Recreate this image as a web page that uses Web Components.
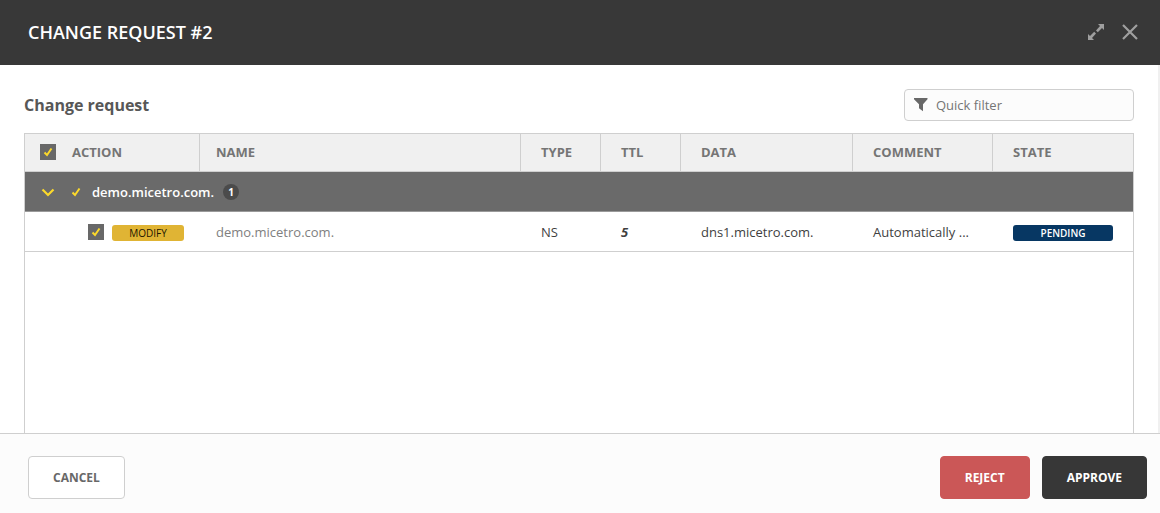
<!DOCTYPE html>
<html lang="en">
<head>
<meta charset="utf-8">
<title>Change request #2</title>
<style>
  html, body { height: 100%; }
  body { margin: 0; font-family: "Open Sans", "Noto Sans", sans-serif; font-size: 13px; color: #3f3f3f; background: #fff; }
</style>
</head>
<body>
<request-dialog>
  <dialog-header slot="header">CHANGE REQUEST #2</dialog-header>
  <section-bar>Change request<quick-filter slot="tools"></quick-filter></section-bar>
  <change-table></change-table>
  <action-button slot="footer-start">CANCEL</action-button>
  <action-button slot="footer-end" kind="danger">REJECT</action-button>
  <action-button slot="footer-end" kind="primary">APPROVE</action-button>
</request-dialog>

<script>
function define(name, html) {
  const template = document.createElement('template');
  template.innerHTML = html;
  customElements.define(name, class extends HTMLElement {
    constructor() {
      super();
      this.attachShadow({ mode: 'open' }).append(template.content.cloneNode(true));
    }
    connectedCallback() {
      const label = this.getAttribute('label');
      const input = this.shadowRoot.querySelector('input[type=checkbox]');
      if (label && input) input.setAttribute('aria-label', label);
    }
  });
}

define('request-dialog', `
<style>
  :host { display: flex; flex-direction: column; height: 100%; }
  main { flex: 1; min-height: 0; box-sizing: border-box; display: flex; flex-direction: column; gap: 12px;
         padding: 24px 24px 0; border-right: 2px solid #f0f0f0; overflow: hidden; }
  footer { display: flex; justify-content: space-between; align-items: center; flex: none; box-sizing: border-box; height: 80px;
           padding: 8px 13px 0 28px; border-top: 1px solid #cfcfcf; background: #fcfcfc; }
  .end { display: flex; gap: 12px; }
</style>
<slot name="header"></slot>
<main><slot></slot></main>
<footer><slot name="footer-start"></slot><div class="end"><slot name="footer-end"></slot></div></footer>`);

define('dialog-header', `
<style>
  :host { display: flex; align-items: center; justify-content: space-between; flex: none; height: 65px; box-sizing: border-box;
          padding: 0 20px 1px 28px; background: #383838; color: #fff; }
  h1 { margin: 0; font-size: 18px; line-height: 24px; font-weight: 600; }
  .tools { display: flex; gap: 14px; }
  button { display: grid; place-items: center; width: 20px; height: 20px; padding: 0; border: 0; background: none; color: #9f9f9f; }
  svg { display: block; }
</style>
<h1><slot></slot></h1>
<div class="tools">
  <button type="button" aria-label="Expand"><svg width="16" height="16" viewBox="0 0 16 16" fill="currentColor"><path d="M10 0h6v6l-2-2-4.200 4.200L8 6.400 12 2zM0 10l2 2 4.200-4.200L8 9.600 4 14l2 2H0z"/></svg></button>
  <button type="button" aria-label="Close"><svg width="16" height="16" viewBox="0 0 16 16" fill="none" stroke="currentColor" stroke-width="2.200"><path d="M1 1l14 14M15 1L1 15"/></svg></button>
</div>`);

define('section-bar', `
<style>
  :host { display: flex; align-items: center; justify-content: space-between; }
  h2 { margin: 0; font-size: 16px; line-height: 24px; font-weight: 700; color: #575757; }
</style>
<h2><slot></slot></h2><slot name="tools"></slot>`);

define('quick-filter', `
<style>
  :host { display: block; width: 230px; }
  label { display: flex; align-items: center; gap: 8px; height: 32px; box-sizing: border-box; padding: 0 9px;
          border: 1px solid #cfcfcf; border-radius: 4px; background: #fcfcfc; color: #686868; }
  input { flex: 1; min-width: 0; padding: 0; border: 0; outline: 0; background: none; font: inherit; line-height: 18px; color: #3f3f3f; }
  input::placeholder { color: #757575; opacity: 1; }
  svg { display: block; flex: none; }
</style>
<label><svg width="14" height="14" viewBox="0 0 14 14" fill="currentColor"><path d="M0 0h13.500v1.300L9 6.300V13.300L5 10.300V6.300L0 1.300z"/></svg><input type="text" placeholder="Quick filter" aria-label="Quick filter"></label>`);

define('check-box', `
<style>
  :host { display: inline-grid; width: 16px; height: 16px; flex: none; }
  input, svg { grid-area: 1 / 1; }
  input { appearance: none; width: 16px; height: 16px; margin: 0; background: #686868; }
  svg { pointer-events: none; z-index: 1; }
  input:not(:checked) + svg { visibility: hidden; }
</style>
<input type="checkbox" checked><svg width="16" height="16" viewBox="0 0 16 16" fill="none" stroke="#fcd92b" stroke-width="2"><path d="M4.500 8.500L7 11l4.500-6.500"/></svg>`);

define('status-tag', `
<style>
  :host { display: block; box-sizing: border-box; height: 16px; border-radius: 3px; background: #e0b434; color: #1c1600;
          font-size: 10px; line-height: 16px; font-weight: 500; text-align: center; }
  :host([kind=pending]) { background: #073763; color: #fff; font-weight: 600; }
</style>
<slot></slot>`);

define('action-button', `
<style>
  :host { display: block; }
  button { display: block; box-sizing: border-box; height: 43px; padding: 0 24px; border: 1px solid #cfcfcf; border-radius: 4px;
           background: #fff; color: #686868; font-family: inherit; font-size: 12px; line-height: 16px; font-weight: 700; }
  :host([kind=danger]) button { background: #cb5757; border-color: #cb5757; color: #fff; }
  :host([kind=primary]) button { background: #373737; border-color: #373737; color: #fff; }
</style>
<button type="button"><slot></slot></button>`);

define('change-table', `
<style>
  :host { display: block; flex: 1; border: 1px solid #cfcfcf; border-bottom: 0; }
  table { width: 100%; table-layout: fixed; border-collapse: separate; border-spacing: 0; font-size: 13px; line-height: 18px; }
  .action { width: 175px; } .short { width: 80px; } .data { width: 172px; } .medium { width: 140px; }
  th, td { box-sizing: border-box; padding: 0 20px; text-align: left; white-space: nowrap; overflow: hidden; text-overflow: ellipsis; border-bottom: 1px solid #cfcfcf; }
  th:nth-child(2), td:nth-child(2) { padding: 0 16px; }
  th:first-child, td:first-child { padding: 0 15px; }
  thead tr th:nth-child(n) { height: 38px; padding-bottom: 1px; background: #f0f0f0; color: #757575; font-weight: 700; border-right: 1px solid #cfcfcf; }
  thead tr th:last-child { border-right: 0; }
  .line { display: flex; align-items: center; gap: 16px; }
  .group th { height: 40px; background: #6a6a6a; color: #fff; font-weight: 600; border-bottom-color: #9a9a9a; }
  .group button { display: block; padding: 0; border: 0; background: none; height: 16px; }
  .group svg { display: block; }
  .mark { width: 16px; margin-right: -12px; }
  .title { display: flex; align-items: center; gap: 9px; }
  .count { width: 16px; height: 16px; border-radius: 8px; background: #4b4b4b; font-size: 10px; line-height: 16px; font-weight: 700; text-align: center; }
  tbody td { height: 40px; font-weight: 500; }
  tbody td:first-child { padding-right: 16px; }
  .item { display: flex; align-items: center; gap: 8px; padding-left: 48px; }
  .item status-tag { flex: 1; }
  td status-tag { margin-top: 2px; }
  .muted { color: #808080; }
  tbody .changed { font-weight: 700; font-style: italic; }
  tbody td.comment { padding-right: 16px; }
</style>
<table>
  <colgroup><col class="action"><col><col class="short"><col class="short"><col class="data"><col class="medium"><col class="medium"></colgroup>
  <thead><tr>
    <th scope="col"><div class="line"><check-box label="Select all"></check-box>ACTION</div></th>
    <th scope="col">NAME</th><th scope="col">TYPE</th><th scope="col">TTL</th><th scope="col">DATA</th><th scope="col">COMMENT</th><th scope="col">STATE</th>
  </tr></thead>
  <tbody>
    <tr class="group"><th colspan="7" scope="rowgroup"><div class="line">
      <button type="button" aria-label="Collapse group"><svg width="16" height="16" viewBox="0 0 16 16" fill="none" stroke="#fcd92b" stroke-width="2.200"><path d="M2.500 5.500L8 11l5.500-5.500"/></svg></button>
      <svg class="mark" width="16" height="16" viewBox="0 0 16 16" fill="none" stroke="#fcd92b" stroke-width="2"><path d="M0.500 8.500L3 11l4.500-6.500"/></svg>
      <span class="title">demo.micetro.com.<span class="count">1</span></span>
    </div></th></tr>
    <tr>
      <td><div class="item"><check-box label="Select demo.micetro.com."></check-box><status-tag>MODIFY</status-tag></div></td>
      <td class="muted">demo.micetro.com.</td><td>NS</td><td class="changed">5</td><td>dns1.micetro.com.</td>
      <td class="comment">Automatically ...</td><td><status-tag kind="pending">PENDING</status-tag></td>
    </tr>
  </tbody>
</table>`);
</script>
</body>
</html>
